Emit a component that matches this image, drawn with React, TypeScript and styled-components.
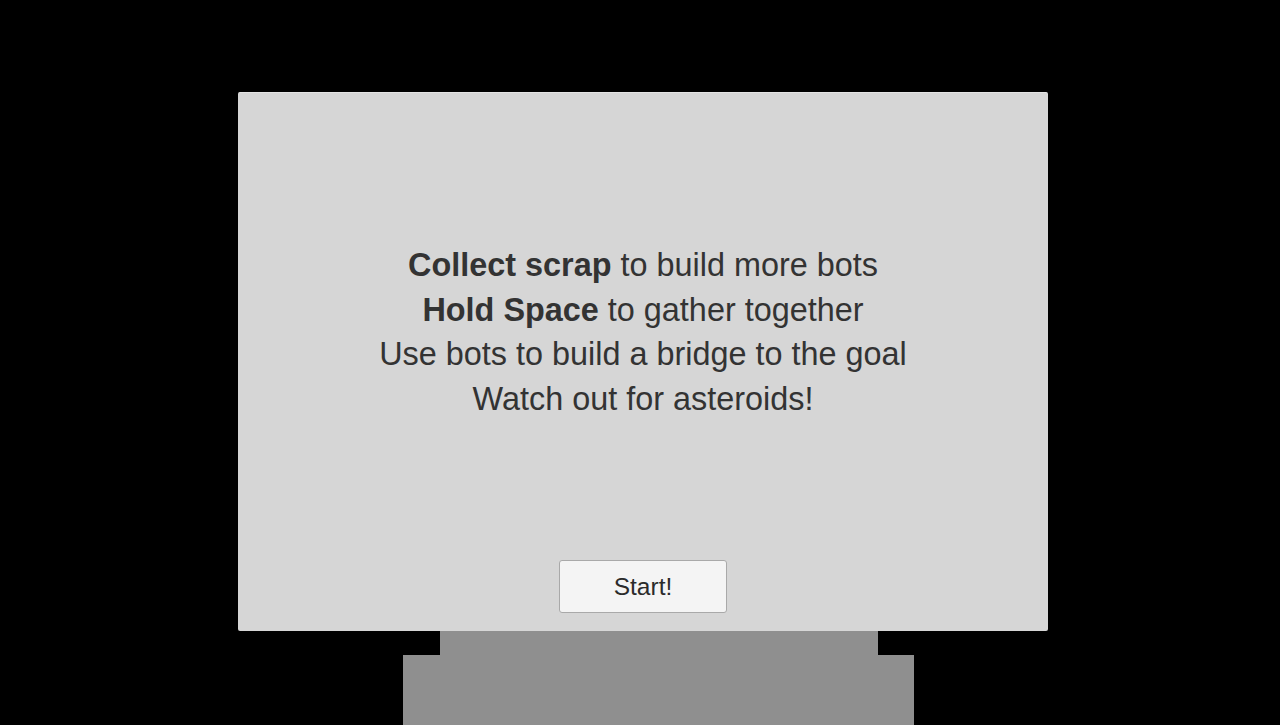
import styled, { createGlobalStyle } from "styled-components";

const GlobalStyle = createGlobalStyle`
    html, body {
        margin: 0;
        padding: 0;
        background: #000;
        height: 100%;
        overflow: hidden;
    }
    body {
        font-family: "Liberation Sans", Arial, sans-serif;
    }
`;

const lines: { bold?: string; rest: string }[] = [
    { bold: "Collect scrap", rest: " to build more bots" },
    { bold: "Hold Space", rest: " to gather together" },
    { rest: "Use bots to build a bridge to the goal" },
    { rest: "Watch out for asteroids!" },
];

function App() {
    return (
        <Stage>
            <GlobalStyle />
            <Panel>
                <Message>
                    {lines.map((line, i) => (
                        <Line key={i}>
                            {line.bold && <strong>{line.bold}</strong>}
                            {line.rest}
                        </Line>
                    ))}
                </Message>
                <StartButton type="button">Start!</StartButton>
            </Panel>
            <Step $left={440} $width={438} $height={24} />
            <Step $left={403} $width={511} $height={70} />
        </Stage>
    );
}

const Stage = styled.div`
    width: 1280px;
    height: 725px;
    padding-top: 92px;
    box-sizing: border-box;
    background: #000;
    display: flex;
    flex-direction: column;
`;

const Panel = styled.div`
    margin-left: 238px;
    width: 810px;
    height: 539px;
    box-sizing: border-box;
    background: #d6d6d6;
    border-top: 1px solid #e4e4e4;
    border-radius: 2px;
    display: flex;
    flex-direction: column;
    align-items: center;
`;

const Message = styled.div`
    margin-top: 150px;
    text-align: center;
    color: #333;
    font-size: 32.4px;
    line-height: 44.5px;

    strong {
        font-weight: 700;
    }
`;

const Line = styled.div`
    white-space: nowrap;
`;

const StartButton = styled.button`
    margin-top: auto;
    margin-bottom: 18px;
    width: 168px;
    height: 53px;
    background: #f4f4f4;
    border: 1px solid #a9a9a9;
    border-radius: 3px;
    color: #2b2b2b;
    font-family: "Liberation Sans", Arial, sans-serif;
    font-size: 24.5px;
    padding: 0;
    cursor: pointer;
`;

const Step = styled.div<{ $left: number; $width: number; $height: number }>`
    margin-left: ${(p) => p.$left}px;
    width: ${(p) => p.$width}px;
    height: ${(p) => p.$height}px;
    flex-shrink: 0;
    background: #8f8f8f;
`;

export default App;
